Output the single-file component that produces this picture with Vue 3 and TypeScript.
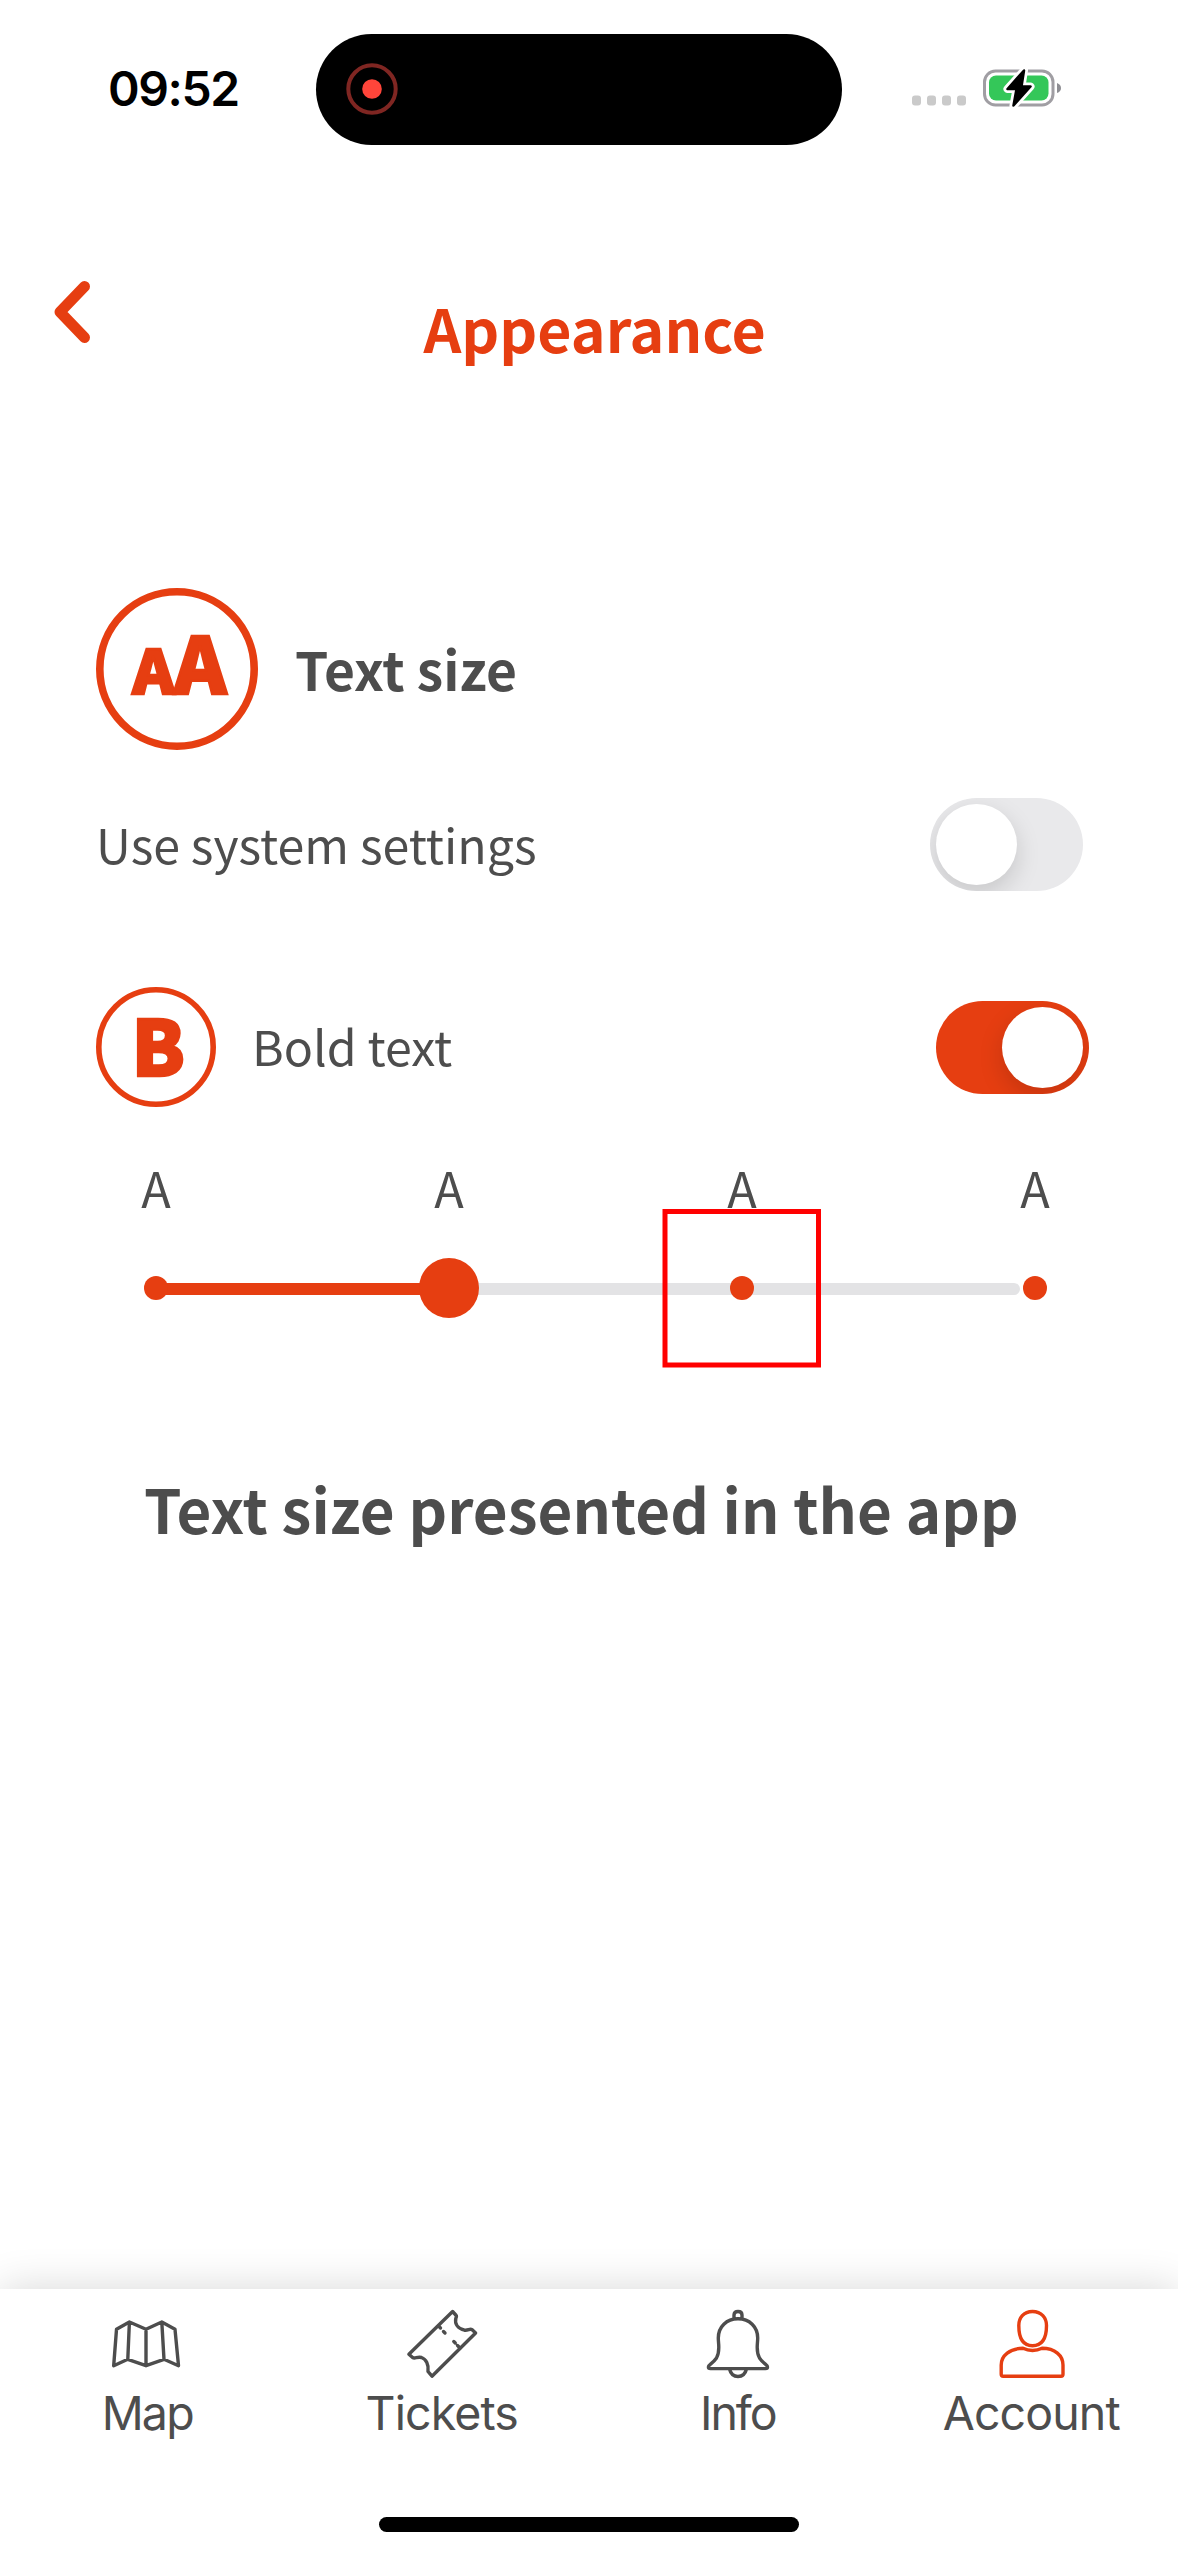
<script setup lang="ts">
import { ref } from 'vue'

const sizes = ['A', 'A', 'A', 'A']
const useSystem = ref(false)
const boldText = ref(true)
</script>

<template>
  <div class="screen">
    <header class="status">
      <span class="time">09:52</span>
      <div class="island">
        <svg width="52" height="52" viewBox="0 0 52 52">
          <circle cx="26" cy="26" r="23.7" fill="none" stroke="#7f2622" stroke-width="4" />
          <circle cx="26" cy="26" r="9.8" fill="#ff453a" />
        </svg>
      </div>
      <svg class="signal" width="150" height="38" viewBox="912 68.5 150 38">
        <g fill="#cacaca">
          <rect x="912" y="95" width="9" height="10" rx="3" />
          <rect x="927" y="95" width="9" height="10" rx="3" />
          <rect x="942" y="95" width="9" height="10" rx="3" />
          <rect x="957" y="95" width="9" height="10" rx="3" />
        </g>
        <rect x="984.5" y="70.5" width="68.5" height="34" rx="11" fill="none" stroke="#a09ea3" stroke-width="3" />
        <rect x="989" y="75" width="59.500" height="25" rx="7" fill="#34c759" />
        <path d="M1057 82.500q4 1.500 4 5t-4 5z" fill="#8e8e93" />
        <path d="M1024 70L1007.500 88.500H1016.500L1013.500 105L1030.500 86H1021.500Z" fill="#fff" stroke="#fff" stroke-width="8" stroke-linejoin="round" />
        <path d="M1024 70L1007.500 88.500H1016.500L1013.500 105L1030.500 86H1021.500Z" fill="#000" stroke="#000" stroke-width="2.500" stroke-linejoin="round" />
      </svg>
    </header>

    <nav class="top">
      <svg class="back" width="36" height="64" viewBox="0 0 36 64">
        <path d="M30.500 6.500L6 32L30.500 57.500" fill="none" stroke="#e63e11" stroke-width="11" stroke-linecap="round" stroke-linejoin="round" />
      </svg>
      <h1>Appearance</h1>
    </nav>

    <main>
      <section class="row heading">
        <svg width="162" height="162" viewBox="0 0 162 162">
          <circle cx="81" cy="81" r="77.200" fill="#fff" stroke="#e63e11" stroke-width="7.600" />
          <g class="glyph">
            <text x="36.500" y="105.500" font-size="60" textLength="42" lengthAdjust="spacingAndGlyphs">A</text>
            <text x="78" y="105.500" font-size="78" textLength="52.500" lengthAdjust="spacingAndGlyphs">A</text>
          </g>
        </svg>
        <h2>Text size</h2>
      </section>

      <section class="row system">
        <span class="label">Use system settings</span>
        <button class="switch" :class="{ on: useSystem }" @click="useSystem = !useSystem"><i></i></button>
      </section>

      <section class="row bold">
        <svg width="120" height="120" viewBox="0 0 120 120">
          <circle cx="60" cy="60" r="57.200" fill="#fff" stroke="#e63e11" stroke-width="5.600" />
          <text class="glyph" x="35.500" y="89" font-size="77">B</text>
        </svg>
        <span class="label">Bold text</span>
        <button class="switch" :class="{ on: boldText }" @click="boldText = !boldText"><i></i></button>
      </section>

      <section class="scale">
        <div class="letters">
          <span v-for="(s, i) in sizes" :key="i">{{ s }}</span>
        </div>
        <div class="slider">
          <svg width="960" height="160" viewBox="96 1208 960 160">
            <rect x="150" y="1283" width="870" height="12" rx="6" fill="#e3e3e5" />
            <rect x="150" y="1283" width="299" height="12" rx="6" fill="#e63e11" />
            <g fill="#e63e11">
              <circle cx="156" cy="1288" r="12" />
              <circle cx="449" cy="1288" r="30" />
              <circle cx="742" cy="1288" r="12" />
              <circle cx="1035" cy="1288" r="12" />
            </g>
            <rect x="665" y="1211.500" width="153.500" height="153.500" fill="none" stroke="#f00" stroke-width="5" />
          </svg>
        </div>
      </section>

      <p class="preview">Text size presented in the app</p>
    </main>

    <footer>
      <div class="tabs">
        <div class="tab">
          <svg width="76" height="76" viewBox="0 0 76 76">
            <path d="M7.500 23.300L20.400 16L37 23.300L52.800 16L66 23.300L69.500 59.700L55 53.300L37 59.700L18.800 53.300L4.700 59.700ZM20.400 16L18.800 53.300M37 23.300V59.700M52.800 16L55 53.300" />
          </svg>
          <span class="map">Map</span>
        </div>
        <div class="tab">
          <svg width="76" height="76" viewBox="0 0 76 76">
            <path d="M48.600 5.500L4.900 48.300L8.600 51.500C11 53 13 50.500 17.500 51.500C22 53 25 58.500 24 65.500L28 70.200L71.600 27L67.900 23.500C65.500 22.500 64 24.800 60.500 24.200C54 22.500 50.500 18 51.800 12.500C52.500 11 52.700 10 52.200 9.500Z" />
            <path d="M35 20.500L36.500 22M39.500 25.500L41 27M49.800 35.500L51.300 37M53.500 39.500L56 42" />
          </svg>
          <span class="tickets">Tickets</span>
        </div>
        <div class="tab">
          <svg width="76" height="76" viewBox="0 0 76 76">
            <path d="M40 12.800C28.500 12.800 20.300 21 20.300 32C20.300 39 22.500 45 18.500 52C14 58.500 10.400 58.500 10.400 61Q10.400 62.600 12.500 62.600H67.500Q69.500 62.600 69.500 61C69.500 58.500 66 58.500 61.500 52C57.500 45 59.700 39 59.700 32C59.700 21 51.500 12.800 40 12.800ZM36 12.500V9Q36 5.500 40 5.500T44 9V12.500M31.500 63C34 73 46 73 48.500 63" />
          </svg>
          <span class="info">Info</span>
        </div>
        <div class="tab active">
          <svg width="76" height="76" viewBox="0 0 76 76">
            <path d="M39.500 5.500C30.500 5.500 25.800 12 25.800 19.500C25.800 32 29.500 39.700 39.500 39.700S53.500 32 53.500 19.500C53.500 12 48.500 5.500 39.500 5.500ZM30 42.300C17 42.300 8.200 49.500 8.200 59V68.300Q8.200 70.300 10.200 70.300H68Q70 70.300 70 68.300V59C70 49.500 62 42.300 49 42.300Q44.500 44.500 39.500 44.500T30 42.300Z" />
          </svg>
          <span class="account">Account</span>
        </div>
      </div>
      <div class="home"></div>
    </footer>
  </div>
</template>

<style>
body {
  margin: 0;
  background: #fff;
}
</style>

<style scoped>
.screen {
  width: 1178px;
  height: 2556px;
  display: flex;
  flex-direction: column;
  overflow: hidden;
  background: #fff;
  color: #4d4d4d;
  font-family: "Noto Sans CJK SC", "Noto Sans", sans-serif;
}
.status {
  height: 178px;
  display: flex;
  align-items: center;
  box-sizing: border-box;
  padding: 0 0 0 108px;
  flex: none;
}
.time {
  width: 208px;
  color: #000;
  font: 600 48px/60px Inter, sans-serif;
  letter-spacing: -1.4px;
}
.island {
  width: 526px;
  height: 111px;
  border-radius: 56px;
  background: #000;
  display: flex;
  align-items: center;
  box-sizing: border-box;
  padding-left: 30px;
}
.signal {
  margin: 0 0 3px 70px;
}
.top {
  height: 410px;
  flex: none;
  display: flex;
  align-items: flex-start;
}
.back {
  margin: 102px 0 0 54px;
}
h1,
h2,
p {
  margin: 0;
  white-space: nowrap;
}
h1 {
  margin: 110px 0 0 333.5px;
  color: #e63e11;
  font-size: 59px;
  line-height: 80px;
  font-weight: 700;
}
main {
  flex: 1;
  padding: 0 89px 0 96px;
}
.row {
  display: flex;
  align-items: center;
}
.row svg {
  overflow: visible;
}
.glyph {
  font-weight: 900;
  line-height: 1;
  fill: #e63e11;
  stroke: #e63e11;
  stroke-width: 2.4px;
}
h2 {
  margin: -3px 0 0 37px;
  font-size: 53.3px;
  line-height: 80px;
  font-weight: 700;
}
.label {
  margin-top: -4px;
  font-size: 48.3px;
  line-height: 72px;
  white-space: nowrap;
}
.system {
  margin-top: 48px;
  height: 93px;
  padding-right: 6px;
}
.bold {
  margin-top: 96px;
  height: 120px;
}
.bold .label {
  margin-left: 36px;
}
.switch {
  width: 153px;
  height: 93px;
  margin-left: auto;
  padding: 6px;
  border: 0;
  border-radius: 47px;
  background: #e9e9eb;
  overflow: hidden;
  display: flex;
}
.switch i {
  width: 81px;
  height: 81px;
  border-radius: 50%;
  background: #fff;
  box-shadow: 0 9px 24px rgba(0, 0, 0, 0.15);
}
.switch.on {
  background: #e63e11;
  justify-content: flex-end;
}
.letters {
  display: grid;
  grid-template-columns: repeat(4, 293px);
  width: 1172px;
  margin: 44px 0 0 -86.500px;
  height: 57px;
  text-align: center;
  font-size: 48.5px;
  line-height: 72px;
}
.slider {
  height: 160px;
}
.slider svg,
.tab svg {
  display: block;
}
.preview {
  margin: 100px 0 0 48px;
  font-size: 60.1px;
  line-height: 80px;
  font-weight: 700;
  letter-spacing: 0.05px;
}
footer {
  height: 267px;
  flex: none;
  background: #fff;
  box-shadow: 0 0 40px rgba(0, 0, 0, 0.16);
}
.tabs {
  height: 228px;
  display: grid;
  grid-template-columns: repeat(4, 1fr);
}
.tab {
  padding-top: 17px;
  display: flex;
  flex-direction: column;
  align-items: center;
  font: 400 46.5px/60px Inter, sans-serif;
  letter-spacing: -0.9px;
}
.tab svg {
  fill: none;
  stroke: #4d4d4d;
  stroke-width: 3.4;
  stroke-linecap: round;
  stroke-linejoin: round;
}
.tab.active svg {
  stroke: #e63e11;
}
.tab span {
  margin-top: 1px;
}
.tab .map {
  letter-spacing: -1.8px;
}
.tab .info {
  margin-left: 3px;
  letter-spacing: -2px;
}
.tab .account {
  margin-left: 1px;
}
.home {
  width: 420px;
  height: 15px;
  margin: 0 auto;
  border-radius: 8px;
  background: #000;
}
</style>
